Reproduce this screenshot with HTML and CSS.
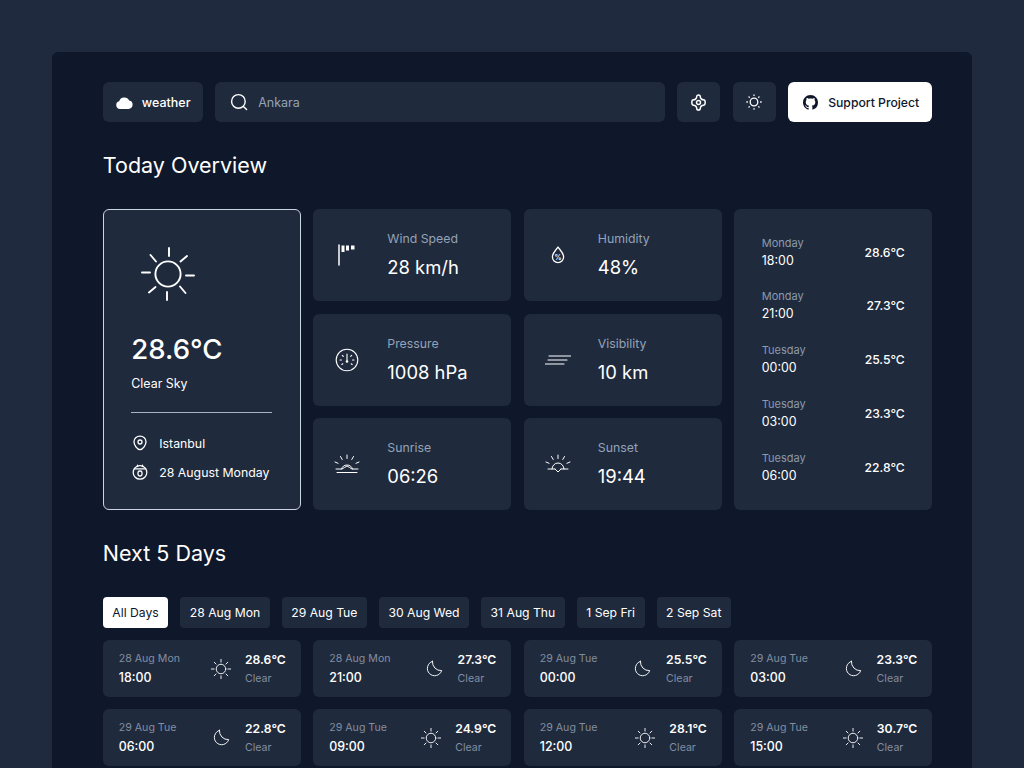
FILE: index.html
```html
<!DOCTYPE html>
<html lang="en">
<head>
    <meta charset="UTF-8">
    <meta name="viewport" content="width=device-width, initial-scale=1.0">
    <title>Weather</title>
    <link rel="stylesheet" href="styles.css">
</head>
<body>
    <svg class="sprites" width="0" height="0">
        <symbol id="sun" viewBox="0 0 24 24">
            <circle cx="12" cy="12" r="5.2"/>
            <path d="M12 1.500v3M12 19.500v3M1.500 12h3M19.500 12h3M4.600 4.600l2 2M17.400 17.400l2 2M4.600 19.400l2-2M17.400 6.600l2-2"/>
        </symbol>
        <symbol id="moon" viewBox="0 0 18 18">
            <path d="M6.800 1.400A7.800 7.800 0 1 0 16.600 11.200 9 9 0 0 1 6.800 1.400Z"/>
        </symbol>
    </svg>

    <main class="panel">
        <header class="topbar">
            <div class="logo">
                <svg class="logo-icon" viewBox="0 0 16 12"><path d="M3.800 12a3.600 3.600 0 0 1-.8-7.100A5 5 0 0 1 12.400 4.200 3.950 3.950 0 0 1 12.200 12Z"/></svg>
                <span>weather</span>
            </div>
            <div class="search">
                <svg class="ico search-icon" viewBox="0 0 18 18"><circle cx="8.400" cy="8.400" r="6.800"/><path d="M13.400 13.400l3.200 3.200"/></svg>
                <span>Ankara</span>
            </div>
            <button class="icon-btn" type="button">
                <svg class="ico ico-target" viewBox="0 0 16 16"><path d="M8 .9c1 0 1.700.8 1.700 1.700 0 .8.300 1.400.9 2s1.100 .9 2 .9c.9 0 1.700 .7 1.700 2.500s-.8 2.500-1.700 2.500c-.9 0-1.400.3-2 .9s-.9 1.200-.9 2c0 .9-.7 1.700-1.700 1.700s-1.700-.8-1.700-1.700c0-.8-.3-1.400-.9-2s-1.100-.9-2-.9C2.500 10.500 1.700 9.800 1.700 8s.8-2.500 1.700-2.500c.9 0 1.400-.3 2-.9s.9-1.200.9-2C6.300 1.700 7 .9 8 .9Z"/><circle cx="8" cy="8" r="1.900"/></svg>
            </button>
            <button class="icon-btn" type="button">
                <svg class="ico ico-16" viewBox="0 0 16 16"><circle cx="8" cy="8" r="3.800"/><path d="M8 .8v.6M8 14.600v.6M.8 8h.6M14.600 8h.6M2.900 2.900l.4.4M12.700 12.700l.4.4M2.900 13.100l.4-.4M12.700 3.300l.4-.4"/></svg>
            </button>
            <button class="support" type="button">
                <svg class="github" viewBox="0 0 16 16"><path d="M8 0C3.580 0 0 3.580 0 8c0 3.540 2.290 6.530 5.470 7.590.4.070.55-.17.55-.38 0-.19-.01-.82-.01-1.490-2.010.37-2.530-.49-2.690-.94-.09-.23-.48-.94-.82-1.130-.28-.15-.68-.52-.01-.53.63-.01 1.080.58 1.230.82.72 1.210 1.870.87 2.330.66.07-.52.28-.87.51-1.070-1.780-.2-3.640-.89-3.640-3.950 0-.87.31-1.590.82-2.150-.08-.2-.36-1.020.08-2.120 0 0 .67-.21 2.200.82.64-.18 1.320-.27 2-.27.68 0 1.360.09 2 .27 1.530-1.040 2.200-.82 2.200-.82.44 1.100.16 1.920.08 2.120.51.56.82 1.270.82 2.150 0 3.070-1.870 3.750-3.650 3.950.29.25.54.73.54 1.480 0 1.070-.01 1.930-.01 2.200 0 .21.15.46.55.38A8.013 8.013 0 0 0 16 8c0-4.420-3.580-8-8-8Z"/></svg>
                Support Project
            </button>
        </header>

        <h2 class="section-title">Today Overview</h2>

        <section class="overview">
            <div class="current">
                <svg class="ico current-sun" viewBox="0 0 56 56">
                    <circle cx="28" cy="28" r="12.600"/>
                    <path d="M29 2v8M27 46v8M2 26.500h8M46 29.500h8M10.500 9l5.500 6.500M40 40.500l5.500 6.500M9 46.500l6.500-5.500M40.500 15.500L47 10"/>
                </svg>
                <div class="current-temp">28.6°C</div>
                <div class="current-sky">Clear Sky</div>
                <div class="divider"></div>
                <div class="current-meta">
                    <svg class="ico ico-16" viewBox="0 0 16 16"><path d="M8 1.200c3.400 0 6 2.500 6 5.600 0 3.200-3 7.900-6 7.900s-6-4.700-6-7.900c0-3.100 2.600-5.600 6-5.600Z"/><circle cx="8" cy="7" r="2"/></svg>
                    <span>Istanbul</span>
                </div>
                <div class="current-meta">
                    <svg class="ico ico-16" viewBox="0 0 16 16"><circle cx="8" cy="8.400" r="6.800"/><path d="M2.200 4.800h11.600M5.500 1.200v1.400M10.500 1.200v1.400"/><rect x="6" y="7" width="4" height="5" rx="1.800"/></svg>
                    <span>28 August Monday</span>
                </div>
            </div>

            <div class="stat">
                <div class="stat-icon">
                    <svg class="ico icon-wind" viewBox="0 0 20 22"><path d="M2 1v20"/><path class="flag" d="M4.500 1.500h3v6.500h-3ZM9 1.500h3v5H9ZM14 1.500h3.500v4H14Z"/></svg>
                </div>
                <div>
                    <div class="stat-label">Wind Speed</div>
                    <div class="stat-value">28 km/h</div>
                </div>
            </div>
            <div class="stat">
                <div class="stat-icon">
                    <svg class="ico icon-drop" viewBox="0 0 14 18"><path d="M7 1c1.200 2.200 5.600 5.600 5.600 10A5.500 5.500 0 0 1 1.400 11C1.400 6.600 5.800 3.200 7 1Z"/><text x="7" y="13.500" class="drop-text">%</text></svg>
                </div>
                <div>
                    <div class="stat-label">Humidity</div>
                    <div class="stat-value">48%</div>
                </div>
            </div>

            <div class="hours">
                <div class="hour">
                    <div><div class="hour-day">Monday</div><div class="hour-time">18:00</div></div>
                    <div class="hour-temp">28.6°C</div>
                </div>
                <div class="hour">
                    <div><div class="hour-day">Monday</div><div class="hour-time">21:00</div></div>
                    <div class="hour-temp">27.3°C</div>
                </div>
                <div class="hour">
                    <div><div class="hour-day">Tuesday</div><div class="hour-time">00:00</div></div>
                    <div class="hour-temp">25.5°C</div>
                </div>
                <div class="hour">
                    <div><div class="hour-day">Tuesday</div><div class="hour-time">03:00</div></div>
                    <div class="hour-temp">23.3°C</div>
                </div>
                <div class="hour">
                    <div><div class="hour-day">Tuesday</div><div class="hour-time">06:00</div></div>
                    <div class="hour-temp">22.8°C</div>
                </div>
            </div>

            <div class="stat">
                <div class="stat-icon">
                    <svg class="ico ico-24" viewBox="0 0 24 24"><circle cx="12" cy="12" r="10.800"/><path d="M12 6v6.500M7.300 7.300l1 1M16.700 7.300l-1 1M5 12h1.500M17.500 12H19M6.800 16.500l1-.7M17.200 16.500l-1-.7"/><circle class="dot" cx="12" cy="13.500" r="1.300"/></svg>
                </div>
                <div>
                    <div class="stat-label">Pressure</div>
                    <div class="stat-value">1008 hPa</div>
                </div>
            </div>
            <div class="stat">
                <div class="stat-icon">
                    <svg class="ico icon-vis" viewBox="0 0 26 10"><path d="M4 1h22M3 5h19M0 9h19"/></svg>
                </div>
                <div>
                    <div class="stat-label">Visibility</div>
                    <div class="stat-value">10 km</div>
                </div>
            </div>
            <div class="stat">
                <div class="stat-icon">
                    <svg class="ico icon-horizon" viewBox="0 0 26 20"><path d="M7.500 15a5.800 5.800 0 0 1 11 0M13 1v3.500M6.500 2.500l1.700 3M19.500 2.500l-1.700 3M1 8l3 1.300M25 8l-3 1.300M2 15h6l2.500-1.500 2.500-1.500 2.500 1.500 2.500 1.500h6M3 18.500h20"/></svg>
                </div>
                <div>
                    <div class="stat-label">Sunrise</div>
                    <div class="stat-value">06:26</div>
                </div>
            </div>
            <div class="stat">
                <div class="stat-icon">
                    <svg class="ico icon-horizon" viewBox="0 0 26 20"><path d="M7 15a6 6 0 0 1 12 0M13 1v3.500M6.500 2.500l1.700 3M19.500 2.500l-1.700 3M1 8l3 1.300M25 8l-3 1.300M3 15h7M16 15h7M10 15l3 3 3-3"/></svg>
                </div>
                <div>
                    <div class="stat-label">Sunset</div>
                    <div class="stat-value">19:44</div>
                </div>
            </div>
        </section>

        <h2 class="section-title">Next 5 Days</h2>

        <nav class="tabs">
            <button class="tab active" type="button">All Days</button>
            <button class="tab" type="button">28 Aug Mon</button>
            <button class="tab" type="button">29 Aug Tue</button>
            <button class="tab" type="button">30 Aug Wed</button>
            <button class="tab" type="button">31 Aug Thu</button>
            <button class="tab" type="button">1 Sep Fri</button>
            <button class="tab" type="button">2 Sep Sat</button>
        </nav>

        <section class="forecast">
            <div class="day">
                <div><div class="day-date">28 Aug Mon</div><div class="day-time">18:00</div></div>
                <div class="day-right">
                    <svg class="ico day-sun"><use href="#sun"/></svg>
                    <div><div class="day-temp">28.6°C</div><div class="day-sky">Clear</div></div>
                </div>
            </div>
            <div class="day">
                <div><div class="day-date">28 Aug Mon</div><div class="day-time">21:00</div></div>
                <div class="day-right">
                    <svg class="ico day-moon"><use href="#moon"/></svg>
                    <div><div class="day-temp">27.3°C</div><div class="day-sky">Clear</div></div>
                </div>
            </div>
            <div class="day">
                <div><div class="day-date">29 Aug Tue</div><div class="day-time">00:00</div></div>
                <div class="day-right">
                    <svg class="ico day-moon"><use href="#moon"/></svg>
                    <div><div class="day-temp">25.5°C</div><div class="day-sky">Clear</div></div>
                </div>
            </div>
            <div class="day">
                <div><div class="day-date">29 Aug Tue</div><div class="day-time">03:00</div></div>
                <div class="day-right">
                    <svg class="ico day-moon"><use href="#moon"/></svg>
                    <div><div class="day-temp">23.3°C</div><div class="day-sky">Clear</div></div>
                </div>
            </div>
            <div class="day">
                <div><div class="day-date">29 Aug Tue</div><div class="day-time">06:00</div></div>
                <div class="day-right">
                    <svg class="ico day-moon"><use href="#moon"/></svg>
                    <div><div class="day-temp">22.8°C</div><div class="day-sky">Clear</div></div>
                </div>
            </div>
            <div class="day">
                <div><div class="day-date">29 Aug Tue</div><div class="day-time">09:00</div></div>
                <div class="day-right">
                    <svg class="ico day-sun"><use href="#sun"/></svg>
                    <div><div class="day-temp">24.9°C</div><div class="day-sky">Clear</div></div>
                </div>
            </div>
            <div class="day">
                <div><div class="day-date">29 Aug Tue</div><div class="day-time">12:00</div></div>
                <div class="day-right">
                    <svg class="ico day-sun"><use href="#sun"/></svg>
                    <div><div class="day-temp">28.1°C</div><div class="day-sky">Clear</div></div>
                </div>
            </div>
            <div class="day">
                <div><div class="day-date">29 Aug Tue</div><div class="day-time">15:00</div></div>
                <div class="day-right">
                    <svg class="ico day-sun"><use href="#sun"/></svg>
                    <div><div class="day-temp">30.7°C</div><div class="day-sky">Clear</div></div>
                </div>
            </div>
        </section>
    </main>
</body>
</html>
```

FILE: styles.css
```css
* {
    box-sizing: border-box;
}

html, body {
    height: 768px;
    overflow: hidden;
}

body {
    margin: 0;
    background-color: #202a3e;
    color: #ffffff;
    font-family: "Inter", "Liberation Sans", sans-serif;
}

button {
    font-family: inherit;
    border: none;
    cursor: pointer;
}

.sprites {
    position: absolute;
}

.ico {
    fill: none;
    stroke: #ffffff;
    stroke-width: 1.3;
    stroke-linecap: round;
    stroke-linejoin: round;
    flex-shrink: 0;
}

.ico-16 {
    width: 16px;
    height: 16px;
}

.ico-target {
    width: 17px;
    height: 17px;
    stroke-width: 1.4;
}

.ico-24 {
    width: 24px;
    height: 24px;
    stroke-width: 1.1;
}

.panel {
    margin: 52px 52px 0;
    height: 716px;
    padding: 30px 40px 0 50.8px;
    background-color: #0f172a;
    border-radius: 6px 6px 0 0;
}

.topbar {
    display: flex;
    gap: 12.5px;
    height: 40px;
}

.logo,
.search,
.icon-btn {
    display: flex;
    align-items: center;
    background-color: #1f2a3d;
    border-radius: 6px;
}

.logo {
    width: 100px;
    padding-left: 13px;
    gap: 9px;
    font-size: 12.5px;
    font-weight: 500;
}

.logo-icon {
    width: 17px;
    height: 13px;
    fill: #ffffff;
}

.search {
    width: 450px;
    padding-left: 15px;
    gap: 10px;
    font-size: 12.5px;
    color: #94a3b8;
}

.search-icon {
    width: 18px;
    height: 18px;
    stroke-width: 1.4;
}

.icon-btn {
    justify-content: center;
    width: 43px;
    height: 40px;
    padding: 0;
}

.support {
    display: flex;
    align-items: center;
    gap: 10px;
    width: 144px;
    padding: 0 0 0 15px;
    background-color: #ffffff;
    border-radius: 6px;
    color: #0f172a;
    font-size: 12.2px;
    font-weight: 500;
    white-space: nowrap;
}

.github {
    width: 15px;
    height: 15px;
    fill: #0f172a;
}

.section-title {
    margin: 30px 0;
    font-size: 21.5px;
    line-height: 27px;
    font-weight: 400;
}

.overview {
    display: grid;
    grid-template-columns: repeat(4, 198px);
    grid-template-rows: repeat(3, 92px);
    gap: 12.5px;
}

.current {
    grid-row: 1 / span 3;
    padding: 36px 27.5px 0;
    background-color: #1f2a3d;
    border: 1px solid #cbd5e1;
    border-radius: 6px;
}

.current-sun {
    display: block;
    width: 56px;
    height: 56px;
    margin-left: 8.5px;
    stroke-width: 1.9;
}

.current-temp {
    margin-top: 29px;
    font-size: 27.6px;
    line-height: 36px;
    font-weight: 500;
}

.current-sky {
    margin-top: 8px;
    font-size: 12.4px;
    line-height: 18px;
}

.divider {
    height: 1px;
    margin: 19px 0 20px;
    background-color: #aab4c3;
}

.current-meta {
    display: flex;
    align-items: center;
    gap: 11px;
    height: 20px;
    margin-bottom: 9px;
    padding-left: 1px;
    font-size: 12.3px;
    white-space: nowrap;
}

.stat {
    display: flex;
    align-items: center;
    background-color: #1f2a3d;
    border-radius: 6px;
}

.stat-icon {
    display: flex;
    justify-content: center;
    width: 74px;
    padding-right: 6px;
}

.stat-label {
    font-size: 12.3px;
    line-height: 16px;
    color: #94a3b8;
}

.stat-value {
    margin-top: 8px;
    font-size: 18.4px;
    line-height: 24px;
}

.icon-wind {
    width: 20px;
    height: 22px;
    stroke-width: 1.5;
}

.flag {
    fill: #ffffff;
    stroke: none;
}

.icon-drop {
    width: 14px;
    height: 18px;
}

.drop-text {
    fill: #ffffff;
    stroke: none;
    font-size: 7px;
    font-weight: 600;
    text-anchor: middle;
}

.icon-vis {
    width: 26px;
    height: 10px;
    stroke-width: 1.1;
}

.icon-horizon {
    width: 26px;
    height: 20px;
    stroke-width: 1;
}

.dot {
    fill: #ffffff;
    stroke: none;
}

.hours {
    grid-column: 4;
    grid-row: 1 / span 3;
    display: flex;
    flex-direction: column;
    justify-content: center;
    gap: 17.75px;
    padding: 0 27.5px;
    background-color: #1f2a3d;
    border-radius: 6px;
}

.hour {
    display: flex;
    align-items: center;
    justify-content: space-between;
    height: 36px;
}

.hour-day {
    font-size: 11px;
    line-height: 16px;
    color: #8d99ac;
}

.hour-time {
    margin-top: 1px;
    font-size: 12.4px;
    line-height: 18px;
}

.hour-temp {
    font-size: 12.2px;
    font-weight: 500;
}

.tabs {
    display: flex;
    gap: 12px;
    margin-bottom: 12px;
}

.tab {
    height: 31px;
    padding: 0 9.5px;
    background-color: #1f2a3d;
    border-radius: 4px;
    color: #ffffff;
    font-size: 12.2px;
}

.tab.active {
    background-color: #ffffff;
    color: #0f172a;
}

.forecast {
    display: grid;
    grid-template-columns: repeat(4, 198px);
    grid-auto-rows: 57px;
    gap: 12px 12.5px;
}

.day {
    display: flex;
    align-items: center;
    justify-content: space-between;
    padding: 0 15px 0 16px;
    background-color: #1f2a3d;
    border-radius: 6px;
}

.day-date {
    font-size: 10.6px;
    line-height: 16px;
    color: #838ea0;
}

.day-time {
    margin-top: 2px;
    font-size: 12.4px;
    line-height: 18px;
    font-weight: 500;
}

.day-right {
    display: flex;
    align-items: center;
    gap: 13px;
}

.day-sun {
    width: 22px;
    height: 22px;
    stroke-width: 1;
}

.day-moon {
    width: 17px;
    height: 17px;
    margin-right: 2px;
    stroke-width: 1;
}

.day-temp {
    font-size: 12.2px;
    line-height: 18px;
    font-weight: 600;
}

.day-sky {
    margin-top: 2px;
    font-size: 10.6px;
    line-height: 16px;
    color: #838ea0;
}
```
